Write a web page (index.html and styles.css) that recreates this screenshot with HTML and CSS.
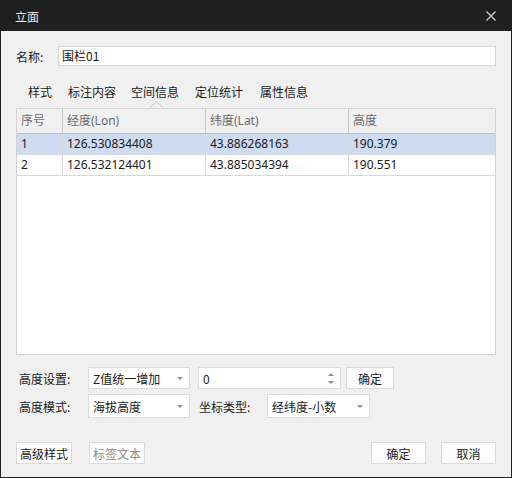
FILE: index.html
```html
<!DOCTYPE html>
<html>
<head>
<meta charset="utf-8">
<link rel="stylesheet" href="styles.css">
</head>
<body>
<div class="win">
  <div class="titlebar">
    <span class="title">立面</span>
    <svg class="close" width="12" height="12" viewBox="0 0 12 12"><path d="M1.5 1.5L10.5 10.5M10.5 1.5L1.5 10.5" stroke="#d0d0d0" stroke-width="1.3"/></svg>
  </div>
  <div class="content">
    <div class="name-row">
      <span class="lbl">名称:</span>
      <div class="input">围栏01</div>
    </div>
    <div class="tabs">
      <span class="tab t1">样式</span>
      <span class="tab t2">标注内容</span>
      <span class="tab t3 active">空间信息<svg class="caret" width="15" height="7" viewBox="0 0 15 7"><path d="M0.5 7L7.5 0.8L14.5 7" fill="#f0f0f0" stroke="#c4c4c4" stroke-width="1"/></svg></span>
      <span class="tab t4">定位统计</span>
      <span class="tab t5">属性信息</span>
    </div>
    <div class="table">
      <div class="row head">
        <div class="c">序号</div><div class="c">经度(Lon)</div><div class="c">纬度(Lat)</div><div class="c last">高度</div>
      </div>
      <div class="row sel">
        <div class="c">1</div><div class="c">126.530834408</div><div class="c">43.886268163</div><div class="c last">190.379</div>
      </div>
      <div class="row">
        <div class="c">2</div><div class="c">126.532124401</div><div class="c">43.885034394</div><div class="c last">190.551</div>
      </div>
    </div>
    <div class="ctl-row r1">
      <span class="flbl">高度设置:</span>
      <div class="select s1"><span>Z值统一增加</span><i class="dd"></i></div>
      <div class="spin"><span>0</span><span class="arrows"><i class="up"></i><i class="down"></i></span></div>
      <div class="btn b-ok1">确定</div>
    </div>
    <div class="ctl-row r2">
      <span class="flbl">高度模式:</span>
      <div class="select s2"><span>海拔高度</span><i class="dd"></i></div>
      <span class="flbl2">坐标类型:</span>
      <div class="select s3"><span>经纬度-小数</span><i class="dd"></i></div>
    </div>
    <div class="footer">
      <div class="btn fb">高级样式</div>
      <div class="btn fb disabled">标签文本</div>
      <div class="spacer"></div>
      <div class="btn fb2">确定</div>
      <div class="btn fb2">取消</div>
    </div>
  </div>
</div>
</body>
</html>
```
FILE: styles.css
```css
html, body { margin: 0; padding: 0; }
body {
  width: 512px; height: 478px; overflow: hidden;
  font-family: "Noto Sans", "Noto Sans CJK SC", sans-serif;
  font-size: 12px; color: #1a1a1a;
}
.win {
  width: 512px; height: 478px; box-sizing: border-box;
  background: #f0f0f0;
  border: 1px solid #1f1f1f; border-top: none;
  display: flex; flex-direction: column;
}
.titlebar {
  height: 31px; background: #1f1f1f; color: #e8e8e8;
  display: flex; align-items: center; justify-content: space-between;
  padding: 0 15px 0 15px; margin: 0 -1px;
  font-family: "Noto Sans CJK SC", sans-serif; font-size: 12px;
}
.title { line-height: 16px; margin-top: 2px; }
.close { margin-top: 0px; }
.content {
  padding: 0 15px 0 15px;
  display: flex; flex-direction: column;
  font-family: "Noto Sans CJK SC", sans-serif;
}
.name-row { display: flex; align-items: center; margin-top: 15px; height: 20px; }
.lbl { width: 42px; }
.input {
  flex: 1; height: 20px; box-sizing: border-box;
  background: #fff; border: 1px solid #d6d6d6;
  padding-left: 3px; line-height: 18px;
}
.tabs {
  display: flex; height: 20px; margin-top: 16px; margin-bottom: 6px;
  line-height: 20px;
}
.tab { position: relative; }
.t1 { margin-left: 12px; }
.t2 { margin-left: 16px; }
.t3 { margin-left: 15px; }
.t4 { margin-left: 16px; }
.t5 { margin-left: 17px; }
.caret { position: absolute; left: 18px; top: 19px; }
.table {
  height: 247px; box-sizing: border-box;
  border: 1px solid #d2d2d2;
  background: #fff;
  position: relative;
}
.row {
  display: grid; grid-template-columns: 46px 143px 143px 1fr;
  height: 21px; box-sizing: border-box;
  border-bottom: 1px solid #d9d9d9;
  line-height: 20px;
  font-family: "Noto Sans", "Noto Sans CJK SC", sans-serif;
}
.row .c { border-right: 1px solid #d9d9d9; padding-left: 4px; white-space: nowrap; }
.row .c.last { border-right: none; }
.row.head {
  height: 25px; background: #f0f0f0; color: #6a6a6a;
  border-bottom: 1px solid #bcbcbc; line-height: 24px;
}
.row.head .c { border-right-color: #c8c8c8; }
.row.sel { background: #cddbf3; }
.ctl-row { display: flex; align-items: center; }
.r1 { margin-top: 12px; height: 22px; }
.r2 { margin-top: 5px; height: 24px; }
.flbl { width: 72px; padding-left: 3px; box-sizing: border-box; }
.flbl2 { margin-left: 9px; width: 68px; }
.select {
  height: 100%; box-sizing: border-box; background: #fff;
  border: 1px solid #dcdcdc;
  display: flex; align-items: center; justify-content: space-between;
  padding: 0 6px 0 4px;
}
.select span { margin-top: 1px; }
.s1 { width: 102px; }
.s2 { width: 102px; }
.s3 { width: 103px; }
.dd {
  width: 0; height: 0;
  border-left: 3px solid transparent; border-right: 3px solid transparent;
  border-top: 3px solid #909090;
}
.spin {
  margin-left: 8px; width: 143px; height: 100%; box-sizing: border-box;
  background: #fff; border: 1px solid #dcdcdc;
  display: flex; align-items: center; justify-content: space-between;
  padding: 0 6px 0 4px;
}
.arrows { display: flex; flex-direction: column; gap: 5px; }
.arrows i { width: 0; height: 0; border-left: 3px solid transparent; border-right: 3px solid transparent; }
.arrows .up { border-bottom: 3px solid #909090; }
.arrows .down { border-top: 3px solid #909090; }
.btn {
  box-sizing: border-box; background: #fcfcfc; border: 1px solid #dadada;
  display: flex; align-items: center; justify-content: center;
  height: 22px;
}
.b-ok1 { margin-left: 5px; width: 48px; }
.footer { display: flex; margin-top: 24px; height: 22px; }
.fb { width: 56px; margin-right: 17px; }
.fb.disabled { color: #8c8c8c; }
.spacer { flex: 1; }
.fb2 { width: 55px; margin-left: 15px; }
```
